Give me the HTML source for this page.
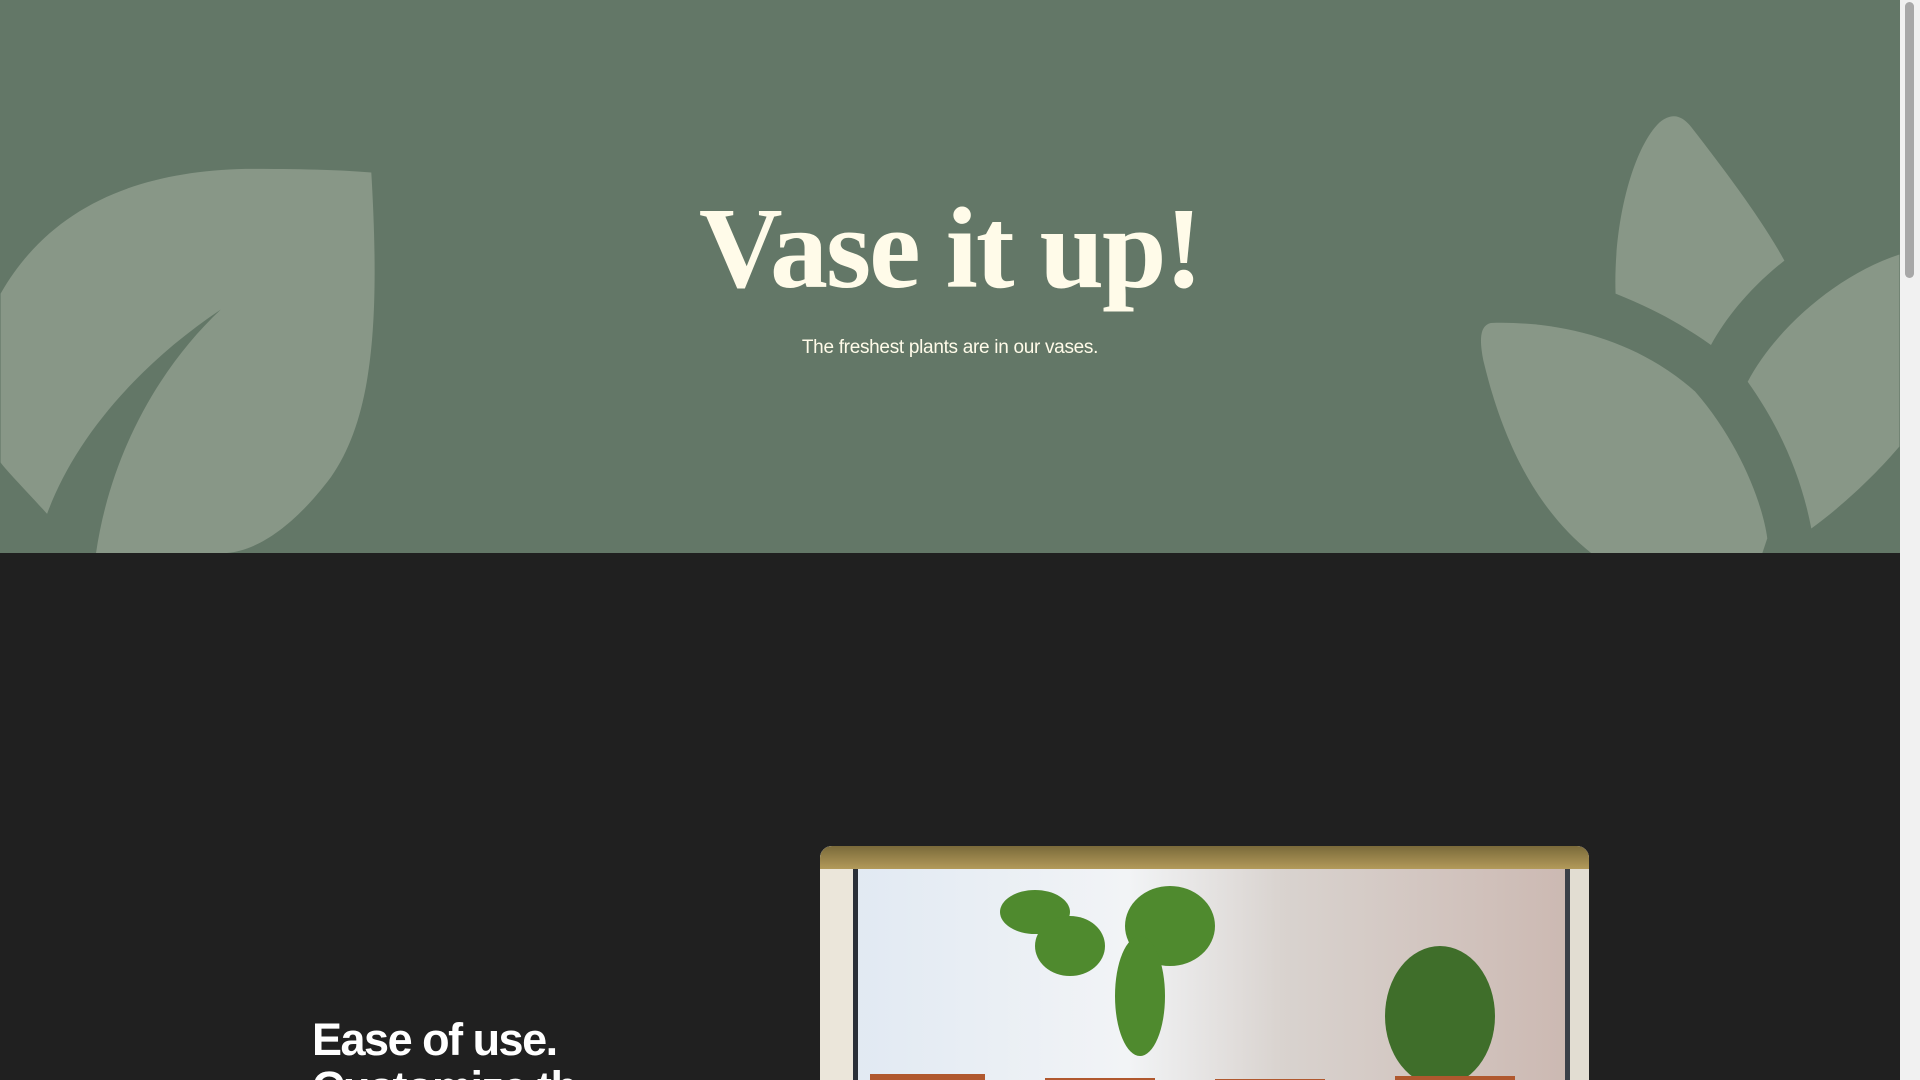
<!DOCTYPE html>
<html><head><style>
html,body{margin:0;padding:0;width:1920px;height:1080px;overflow:hidden;background:#202020;font-family:"Liberation Sans",sans-serif}
.wrap{position:relative;width:1920px;height:1080px;overflow:hidden}
.hero{position:absolute;left:0;top:0;width:1900px;height:553px;background:#637767;overflow:hidden}
.hero svg{position:absolute;left:0;top:0}
h1{position:absolute;left:0;width:1900px;top:184px;margin:0;text-align:center;font-family:"Liberation Serif",serif;font-weight:bold;font-size:116px;letter-spacing:-2px;color:#fffbe9;line-height:130px}
.sub{position:absolute;left:0;width:1900px;top:337px;text-align:center;color:#fffbe9;font-size:19px;letter-spacing:-0.3px}
.sb{position:absolute;left:1900px;top:0;width:20px;height:1080px;background:#f1f1f1}
.thumb{position:absolute;left:1905px;top:2px;width:9px;height:276px;background:#a8a8a8;border-radius:5px}
h2{position:absolute;left:312px;top:1016px;margin:0;color:#fff;font-size:45px;font-weight:bold;line-height:48px;letter-spacing:-1.5px}
.photo{position:absolute;left:820px;top:846px;width:769px;height:234px;border-radius:12px 12px 0 0;overflow:hidden;background:#e8ecef}
</style></head><body><div class="wrap">
<div class="hero">
<svg width="1900" height="553" viewBox="0 0 1552 452">
<g fill="#889787">
<path d="M303,141 C310,260 305,340 270,390 C240,430 210,450 185,452 L78,452 C90,370 130,300 180,253 C110,300 60,360 38,420 C20,400 5,385 0,378 L0,240 C40,170 110,140 200,138 C250,138 280,139 303,141 Z"/>
<path d="M1320,240 C1318,180 1335,120 1356,100 C1366,92 1374,94 1382,104 C1410,140 1440,180 1458,213 C1430,235 1410,260 1398,282 C1370,262 1345,250 1320,240 Z"/>
<path d="M1552,208 C1500,225 1450,270 1428,312 C1455,350 1472,390 1480,432 C1510,410 1535,385 1552,365 Z"/>
<path d="M1218,264 C1280,262 1340,280 1385,320 C1420,360 1440,410 1444,440 L1440,452 L1300,452 C1260,420 1230,370 1212,295 C1208,275 1210,266 1218,264 Z"/>
</g></svg>
<h1>Vase it up!</h1>
<div class="sub">The freshest plants are in our vases.</div>
</div>
<div class="sb"></div><div class="thumb"></div>
<h2>Ease of use.<br>Customize th</h2>
<div class="photo">
<svg width="769" height="234" viewBox="0 0 769 234">
<defs><linearGradient id="w" x1="0" x2="1"><stop offset="0" stop-color="#dfe8f2"/><stop offset="0.4" stop-color="#f2f4f6"/><stop offset="0.6" stop-color="#d9d3cf"/><stop offset="1" stop-color="#cbb7b0"/></linearGradient>
<linearGradient id="f" x1="0" y1="0" x2="0" y2="1"><stop offset="0" stop-color="#7a6a3a"/><stop offset="1" stop-color="#b39a5a"/></linearGradient></defs>
<rect width="769" height="234" fill="url(#w)"/>
<rect x="0" y="0" width="769" height="23" fill="url(#f)"/>
<rect x="0" y="23" width="35" height="217" fill="#ebe6da"/>
<rect x="33" y="23" width="5" height="217" fill="#2a3038"/>
<rect x="745" y="23" width="5" height="217" fill="#3a4048"/>
<rect x="750" y="23" width="19" height="217" fill="#e2ddd2"/>
<g fill="#4f8a2e">
<ellipse cx="215" cy="66" rx="35" ry="22"/><ellipse cx="250" cy="100" rx="35" ry="30"/>
<ellipse cx="350" cy="80" rx="45" ry="40"/><ellipse cx="320" cy="150" rx="25" ry="60"/>
<ellipse cx="430" cy="290" rx="30" ry="30"/><ellipse cx="465" cy="265" rx="20" ry="30"/>
<ellipse cx="620" cy="170" rx="55" ry="70" fill="#3f6e2a"/>
<ellipse cx="90" cy="310" rx="60" ry="25"/>
</g>
<g fill="#b0582e"><rect x="50" y="228" width="115" height="20"/><rect x="225" y="232" width="110" height="20"/><rect x="395" y="233" width="110" height="20"/><rect x="575" y="230" width="120" height="20"/></g>
</svg>
</div>
</div></body></html>
